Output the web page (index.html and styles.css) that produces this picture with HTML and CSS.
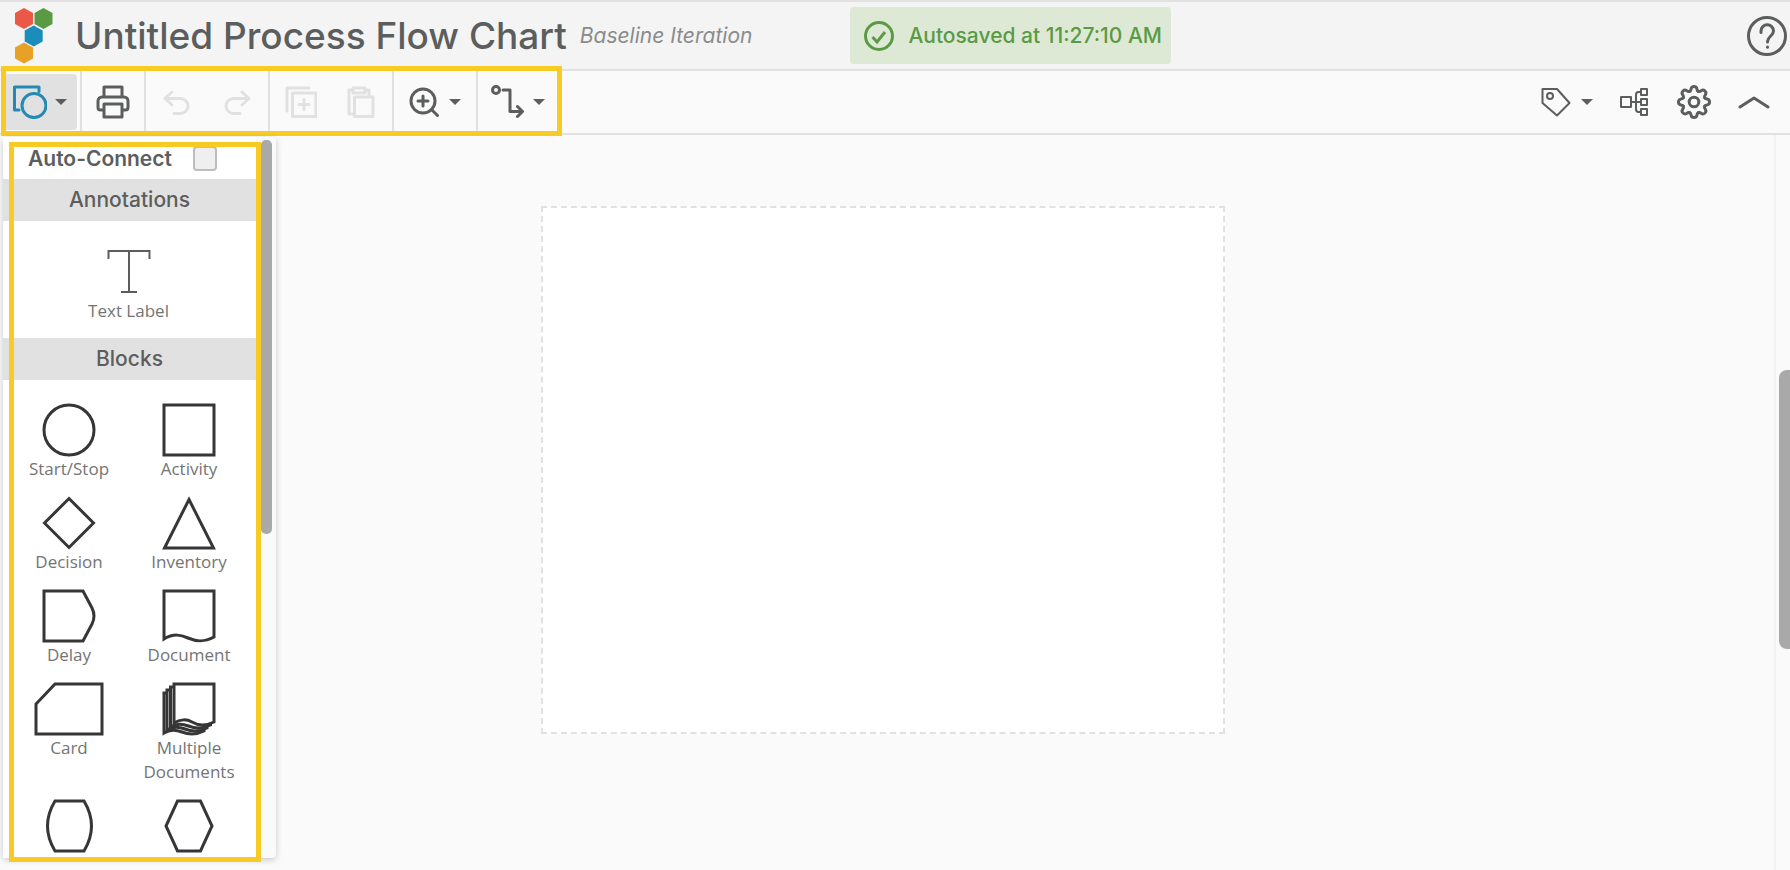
FILE: index.html
```html
<!DOCTYPE html>
<html lang="en">
<head>
    <meta charset="UTF-8">
    <meta name="viewport" content="width=device-width, initial-scale=1.0">
    <title>Untitled Process Flow Chart</title>
    <link rel="stylesheet" href="styles.css">
</head>
<body>
    <header class="header">
        <svg class="logo" width="38" height="56" viewBox="0 0 38 56" aria-hidden="true">
            <polygon fill="#ea5947" points="9,0 18,5 18,16 9,21 0,16 0,5"/>
            <polygon fill="#5b9a44" points="28.500,0 37.500,5 37.500,16 28.500,21 19.500,16 19.500,5"/>
            <polygon fill="#1a8dbb" points="18.700,17.500 27.700,22.500 27.700,33.500 18.700,38.500 9.700,33.500 9.700,22.500"/>
            <polygon fill="#e6a126" points="9,34.500 18,39.500 18,50.500 9,55.500 0,50.500 0,39.500"/>
        </svg>
        <h1 class="title">Untitled Process Flow Chart</h1>
        <span class="iteration">Baseline Iteration</span>
        <div class="autosave">
            <svg width="30" height="30" viewBox="0 0 30 30" aria-hidden="true">
                <circle cx="15" cy="15" r="13.500"/>
                <path d="M8.500 16l4.500 5 8-10"/>
            </svg>
            <span>Autosaved at 11:27:10 AM</span>
        </div>
        <button class="help" aria-label="Help">
            <svg width="40" height="40" viewBox="0 0 40 40">
                <circle cx="20" cy="20" r="18.500"/>
                <path d="M14 16.500v-1.500a6 6 0 0 1 12.500 0c0 5-6 5.500-6 10.500v.500"/>
                <path d="M20.500 31v.200"/>
            </svg>
        </button>
    </header>

    <nav class="toolbar">
        <div class="tools">
            <div class="group">
                <button class="tool active" aria-label="Shapes">
                    <svg width="34" height="34" viewBox="0 0 34 34">
                        <path d="M6 25H1.500V2H26v4.500"/>
                        <circle cx="21" cy="20.500" r="12"/>
                    </svg>
                    <span class="caret"></span>
                </button>
            </div>
            <div class="group">
                <button class="tool" aria-label="Print">
                    <svg width="34" height="34" viewBox="0 0 34 34">
                        <path d="M8 12V2h18v10M8 25H4.500a2.500 2.500 0 0 1-2.500-2.500V16a4 4 0 0 1 4-4h22a4 4 0 0 1 4 4v6.500a2.500 2.500 0 0 1-2.500 2.500H26M8 19h18v13H8z"/>
                    </svg>
                </button>
            </div>
            <div class="group wide">
                <button class="tool" aria-label="Undo" disabled>
                    <svg width="28" height="26" viewBox="0 0 28 26">
                        <path d="M9 3L2 9.500 9 16M2 9.500h15.500a7.500 7.500 0 0 1 0 15H11"/>
                    </svg>
                </button>
                <button class="tool" aria-label="Redo" disabled>
                    <svg width="28" height="26" viewBox="0 0 28 26">
                        <path d="M19 3l7 6.500-7 6.500M26 9.500H10.500a7.500 7.500 0 0 0 0 15H17"/>
                    </svg>
                </button>
            </div>
            <div class="group wide">
                <button class="tool" aria-label="Copy" disabled>
                    <svg width="32" height="32" viewBox="0 0 32 32">
                        <path d="M2 25V2h22M7.500 7H31v23.500H7.500zM19 13.500v10M14 18.500h10"/>
                    </svg>
                </button>
                <button class="tool" aria-label="Paste" disabled>
                    <svg width="28" height="32" viewBox="0 0 28 32">
                        <path d="M6 28H2V4h4M18 4h4v6M6 2h12v5H6zM7.500 11H26v19.500H7.500z"/>
                    </svg>
                </button>
            </div>
            <div class="group zoom">
                <button class="tool" aria-label="Zoom">
                    <svg width="30" height="30" viewBox="0 0 30 30">
                        <circle cx="14" cy="14" r="12"/>
                        <path d="M22.500 22.500L28.500 28.500M14 9v10M9 14h10"/>
                    </svg>
                    <span class="caret"></span>
                </button>
            </div>
            <div class="group connector">
                <button class="tool" aria-label="Connector style">
                    <svg width="34" height="34" viewBox="0 0 34 34">
                        <circle cx="5" cy="5" r="3.500"/>
                        <path d="M12 5h7v21.500h12M26.500 21.500l5 5-5 5"/>
                    </svg>
                    <span class="caret"></span>
                </button>
            </div>
            <div class="callout"></div>
        </div>
        <div class="options">
            <button class="tool" aria-label="Tags">
                <svg class="thin" width="30" height="30" viewBox="0 0 30 30">
                    <path d="M1.500 2h14.500l12.500 14L16 28.500 1.500 16z"/>
                    <circle cx="9" cy="9" r="3"/>
                </svg>
                <span class="caret"></span>
            </button>
            <button class="tool" aria-label="Arrange">
                <svg class="thin" width="30" height="30" viewBox="0 0 30 30">
                    <path d="M2 10h10v10H2zM22 2h6v6h-6zM22 12h6v6h-6zM22 22h6v6h-6zM12 15h10M22 5h-2.500q-2.500 0-2.500 3v14q0 3 2.500 3H22"/>
                </svg>
            </button>
            <button class="tool" aria-label="Settings">
                <svg width="34" height="34" viewBox="-17 -17 34 34">
                    <defs>
                        <path id="tooth" d="M-4.400-10.600C-3.200-11.100-3.100-12-2.900-13.200-2.600-14.800-1.500-15.500 0-15.500S2.600-14.800 2.900-13.200C3.100-12 3.200-11.100 4.400-10.600"/>
                    </defs>
                    <use href="#tooth"/>
                    <use href="#tooth" transform="rotate(45)"/>
                    <use href="#tooth" transform="rotate(90)"/>
                    <use href="#tooth" transform="rotate(135)"/>
                    <use href="#tooth" transform="rotate(180)"/>
                    <use href="#tooth" transform="rotate(225)"/>
                    <use href="#tooth" transform="rotate(270)"/>
                    <use href="#tooth" transform="rotate(315)"/>
                    <circle r="4.800"/>
                </svg>
            </button>
            <button class="tool" aria-label="Collapse">
                <svg width="32" height="14" viewBox="0 0 32 14">
                    <path d="M2 12L16 3l14 9"/>
                </svg>
            </button>
        </div>
    </nav>

    <main class="workspace">
        <div class="canvas"></div>

        <aside class="sidebar">
            <div class="palette">
                <div class="auto-connect">
                    <label for="autoConnect">Auto-Connect</label>
                    <input type="checkbox" id="autoConnect">
                </div>

                <h2>Annotations</h2>
                <div class="annotations">
                    <svg width="44" height="46" viewBox="0 0 44 46">
                        <path d="M1.500 10V2H42.500v8M22 2v41M14 43h16"/>
                    </svg>
                    <span>Text Label</span>
                </div>

                <h2>Blocks</h2>
                <div class="blocks">
                    <div class="block">
                        <svg width="54" height="54" viewBox="0 0 54 54"><circle cx="27" cy="27" r="25"/></svg>
                        <span>Start/Stop</span>
                    </div>
                    <div class="block">
                        <svg width="54" height="54" viewBox="0 0 54 54"><path d="M2 2h50v50H2z"/></svg>
                        <span>Activity</span>
                    </div>
                    <div class="block">
                        <svg width="54" height="54" viewBox="0 0 54 54"><path d="M27 2.500L51.500 27 27 51.500 2.500 27z"/></svg>
                        <span>Decision</span>
                    </div>
                    <div class="block">
                        <svg width="54" height="54" viewBox="0 0 54 54"><path d="M27 3.500L51.500 52h-49z"/></svg>
                        <span>Inventory</span>
                    </div>
                    <div class="block">
                        <svg width="54" height="54" viewBox="0 0 54 54"><path d="M2 2h39l9 17q4 8 0 16l-9 17H2z"/></svg>
                        <span>Delay</span>
                    </div>
                    <div class="block">
                        <svg width="54" height="54" viewBox="0 0 54 54"><path d="M2 2h50v46c-11 6-19 4-26 1s-14-5-24 1z"/></svg>
                        <span>Document</span>
                    </div>
                    <div class="block">
                        <svg width="70" height="54" viewBox="0 0 70 54"><path d="M21 2h47v50H2V22z"/></svg>
                        <span>Card</span>
                    </div>
                    <div class="block">
                        <svg class="stack" width="54" height="54" viewBox="0 0 54 54">
                            <path d="M2 11H42V49c-10 5-17 3-22 1s-12-3-18 1z"/>
                            <path d="M5 8H45V46c-10 5-17 3-22 1s-12-3-18 1z"/>
                            <path d="M8.500 5H48.500V43c-10 5-17 3-22 1s-12-3-18 1z"/>
                            <path d="M12 2H52V40c-10 5-17 3-22 0s-12-3-18 1z"/>
                        </svg>
                        <span>Multiple Documents</span>
                    </div>
                    <div class="block">
                        <svg width="54" height="54" viewBox="0 0 54 54"><path d="M13 2h29q15 25 0 50H13q-15-25 0-50z"/></svg>
                    </div>
                    <div class="block">
                        <svg width="54" height="54" viewBox="0 0 54 54"><path d="M15.500 2h23L50 27 38.500 52h-23L4 27z"/></svg>
                    </div>
                </div>
            </div>
            <div class="palette-thumb"></div>
            <div class="callout"></div>
        </aside>

        <div class="scrollbar">
            <div class="thumb"></div>
        </div>
    </main>
</body>
</html>
```
FILE: styles.css
```css
* {
    box-sizing: border-box;
}
body {
    margin: 0;
    height: 100vh;
    display: flex;
    flex-direction: column;
    overflow: hidden;
    background: #fafafa;
    color: #5c5e5e;
    font-family: Inter, "Open Sans", sans-serif;
}
button {
    border: 0;
    padding: 0;
    background: none;
    color: inherit;
    cursor: pointer;
}
svg {
    display: block;
    flex: none;
    fill: none;
    stroke: currentColor;
    stroke-width: 3;
}
h1, h2 {
    margin: 0;
}

/* header */
.header {
    display: flex;
    align-items: center;
    height: 71px;
    padding: 0 3px 0 15px;
    background: #f4f4f4;
    border-top: 2px solid #e1e1e1;
    border-bottom: 2px solid #e1e1e1;
    white-space: nowrap;
}
.logo {
    stroke: none;
    margin-right: 22px;
}
.title {
    font-size: 37px;
    line-height: 44px;
    font-weight: 500;
}
.iteration {
    margin-left: 13px;
    font-size: 21px;
    font-style: italic;
    color: #8a8c8c;
}
.autosave {
    display: flex;
    align-items: center;
    gap: 14px;
    height: 57px;
    margin-left: 98px;
    padding: 0 9px 0 14px;
    border-radius: 4px;
    background: #dde9d5;
    color: #5b9a44;
    font-size: 21px;
    font-weight: 500;
}
.help {
    margin-left: auto;
}
.help svg {
    stroke-linecap: round;
}

/* toolbar */
.toolbar {
    display: flex;
    justify-content: space-between;
    height: 64px;
    border-bottom: 2px solid #e1e1e1;
}
.tools {
    position: relative;
    display: flex;
    width: 562px;
}
.group {
    display: flex;
    align-items: center;
    justify-content: center;
    width: 64px;
    border-right: 2px solid #e1e1e1;
}
.group:first-child {
    width: 82px;
}
.group.wide {
    width: 124px;
}
.group.zoom {
    width: 84px;
}
.group.connector {
    width: 80px;
    border-right: 0;
}
.tool {
    display: flex;
    align-items: center;
    justify-content: center;
    gap: 10px;
    width: 60px;
    height: 56px;
}
.group:first-child .tool,
.zoom .tool {
    width: 74px;
}
.group:first-child .tool,
.connector .tool {
    gap: 8px;
}
.tool svg {
    stroke-linejoin: round;
    stroke-linecap: round;
}
.tool .thin {
    stroke-width: 2;
}
.tool.active {
    background: #e1e1e1;
    border-radius: 4px;
}
.tool.active svg {
    color: #2489b3;
}
.tool:disabled {
    color: #e1e1e1;
}
.caret {
    border: 6px solid transparent;
    border-top-color: #5c5e5e;
    border-bottom: 0;
}
.options {
    display: flex;
    align-items: center;
    padding-right: 6px;
}
.options .tool:first-child {
    width: 74px;
}

/* yellow outlines that mark the toolbar and the palette */
.callout {
    position: absolute;
    border: 5px solid #f8cb24;
    pointer-events: none;
}
.tools .callout {
    inset: -5px 0 -3px 1px;
}
.sidebar .callout {
    inset: 5px 15px -4px 6px;
}

/* workspace */
.workspace {
    position: relative;
    flex: 1;
    display: flex;
    justify-content: center;
    align-items: flex-start;
    padding: 71px 24px 0 0;
    min-height: 0;
}
.canvas {
    width: 684px;
    height: 528px;
    background: #fff;
    border: 2px dashed #e1e1e1;
}
.scrollbar {
    position: absolute;
    inset: 0 0 0 auto;
    width: 16px;
    border-left: 2px solid #f2f2f2;
}
.thumb {
    position: absolute;
    top: 32%;
    right: 0;
    width: 11px;
    height: 38%;
    border-radius: 8px 0 0 8px;
    background: #a9a9a9;
}

/* shape palette */
.sidebar {
    position: absolute;
    inset: 2px auto 12px 3px;
    width: 273px;
    background: #fafafa;
    border-radius: 4px;
    box-shadow: 0 2px 6px rgba(0, 0, 0, 0.2);
}
.palette {
    width: 253px;
    height: 100%;
    overflow: hidden;
    background: #fff;
}
.palette-thumb {
    position: absolute;
    top: 3px;
    right: 4px;
    width: 11px;
    height: 394px;
    border-radius: 5px;
    background: #a9a9a9;
}
.auto-connect {
    display: flex;
    align-items: center;
    justify-content: space-between;
    height: 42px;
    padding: 0 39px 0 25px;
    font-size: 21px;
    font-weight: 600;
}
.auto-connect input {
    appearance: none;
    width: 24px;
    height: 25px;
    margin: 0;
    background: #efefef;
    border: 2px solid #bdbdbd;
    border-radius: 4px;
}
.palette h2 {
    background: #e1e1e1;
    font-size: 21px;
    line-height: 42px;
    font-weight: 500;
    text-align: center;
}
.annotations,
.block {
    display: flex;
    flex-direction: column;
    align-items: center;
    color: #747474;
    font: 17px/24px "Open Sans", sans-serif;
    text-align: center;
}
.annotations {
    height: 117px;
    padding: 28px 2px 0 0;
    gap: 4px;
}
.annotations svg {
    stroke: #5c5e5e;
    stroke-width: 2;
}
.blocks {
    display: grid;
    grid-template-columns: 120px 120px;
    row-gap: 15px;
    padding: 23px 7px 0 6px;
}
.block svg {
    stroke: #363636;
}
.block .stack {
    fill: #fff;
}
```
